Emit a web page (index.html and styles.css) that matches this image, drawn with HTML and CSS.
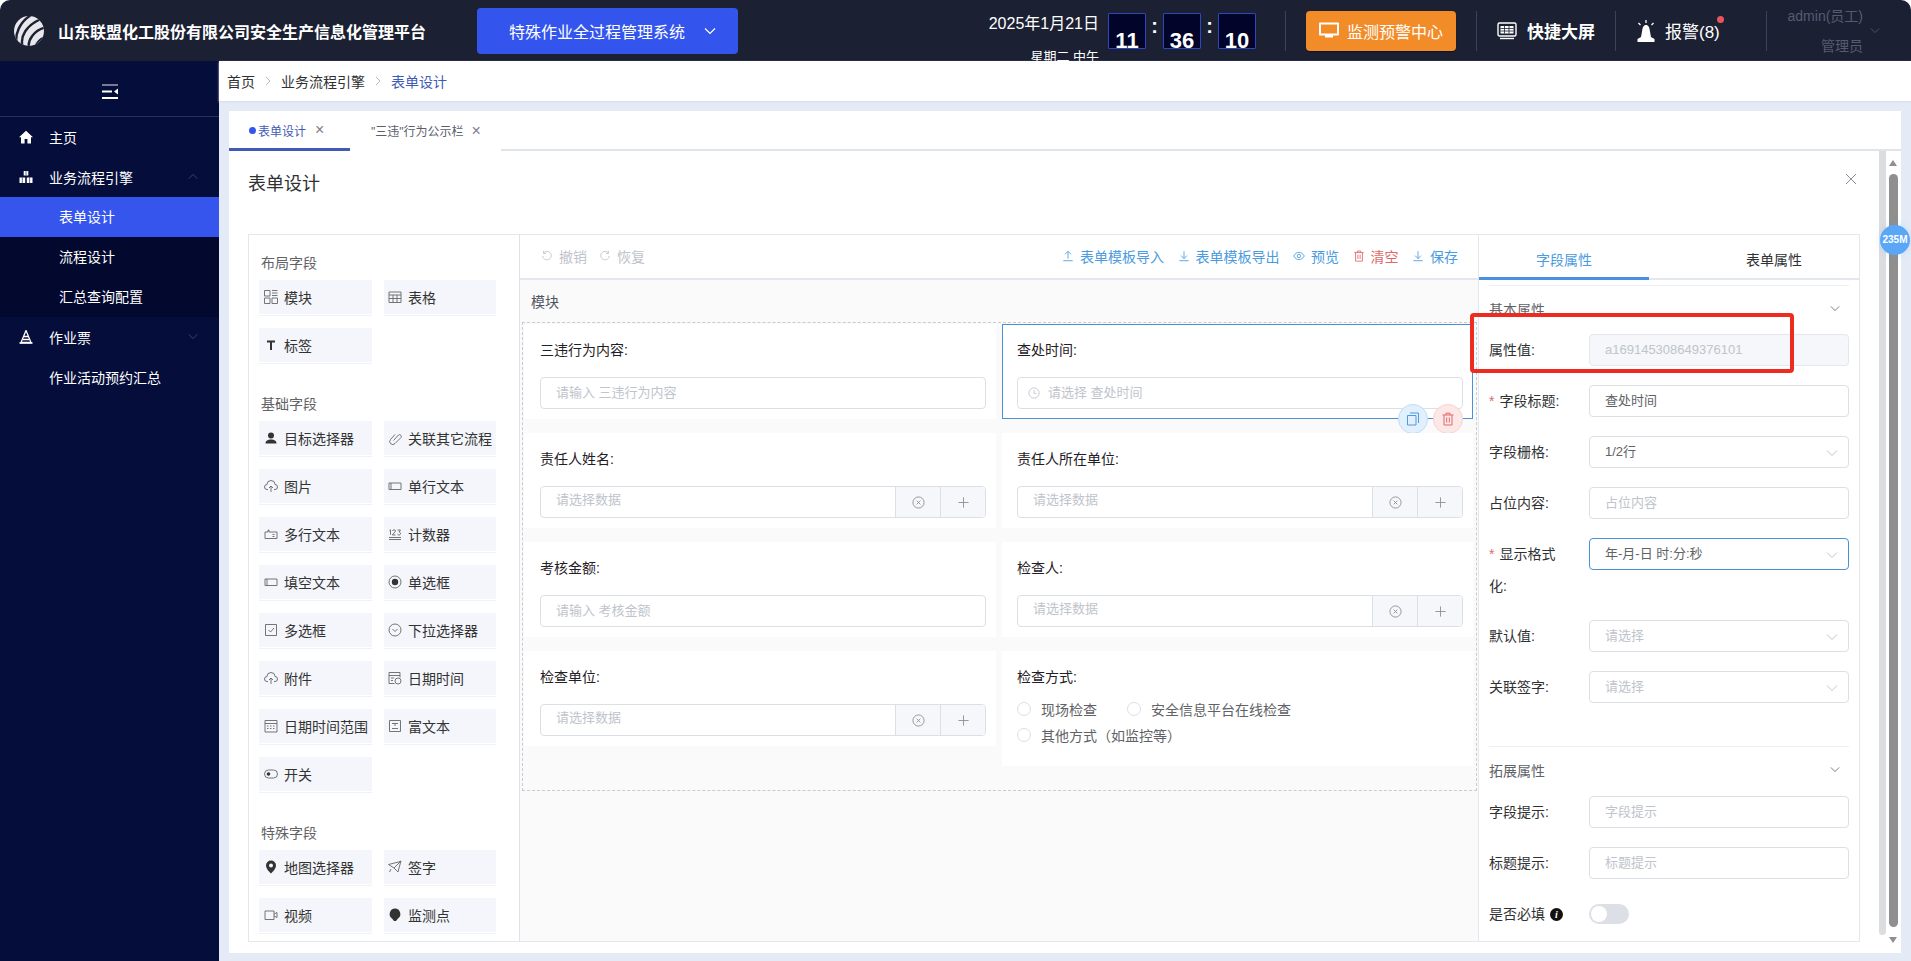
FILE: index.html
```html
<!DOCTYPE html>
<html lang="zh-CN">
<head>
<meta charset="utf-8">
<title>表单设计</title>
<link rel="stylesheet" href="styles.css">
</head>
<body>
<div class="app">
  <header class="topbar">
    <svg class="logo" viewBox="0 0 30 30"><defs><clipPath id="lc"><circle cx="15" cy="15" r="15"/></clipPath></defs><g clip-path="url(#lc)"><rect width="30" height="30" fill="#e8e8ec"/><g fill="none" stroke="#1b2033" stroke-width="2.4"><path d="M3 30C0 18 6 6 17-1"/><path d="M9 32C5 20 13 9 27 3"/><path d="M15 33C13 24 20 14 33 11"/><path d="M21 33C22 27 27 22 34 20"/><path d="M27 33C28 31 30 29 33 28"/></g></g></svg>
    <div class="brand">山东联盟化工股份有限公司安全生产信息化管理平台</div>
    <div class="sys-btn"><span>特殊作业全过程管理系统</span><svg class="chev-w" viewBox="0 0 12 8"><path d="M1 1.500l5 5 5-5"/></svg></div>
    <div class="date"><div>2025年1月21日</div><div class="week">星期二 中午</div></div>
    <div class="clock"><div class="digit">11</div><div class="colon">:</div><div class="digit">36</div><div class="colon">:</div><div class="digit">10</div></div>
    <div class="vline vl1"></div>
    <div class="warn-btn"><svg class="w-ic" viewBox="0 0 20 18"><path d="M1 1.500h18v11H1z" fill="none" stroke="#fff" stroke-width="2" stroke-linejoin="round"/><path d="M6 13h8v2.500H6z" fill="#fff"/></svg><span>监测预警中心</span></div>
    <div class="vline vl2"></div>
    <svg class="screen-ic" viewBox="0 0 20 20"><rect x="1" y="2" width="18" height="13" rx="1.500" fill="none" stroke="#fff" stroke-width="1.400"/><path d="M3.500 5h13v7.500h-13z" fill="#fff"/><path d="M3.500 7.500h13M3.500 10h13M7.500 5v7.500M12 5v7.500" stroke="#1b2033" stroke-width=".8"/><path d="M3 17.500h14" stroke="#fff" stroke-width="1.400"/></svg>
    <div class="big-link">快捷大屏</div>
    <div class="vline vl3"></div>
    <svg class="bell-ic" viewBox="0 0 20 22"><path d="M10 5c2.500 0 3.500 2.500 3.800 5.500L15 17l3.500 2v3H1.500v-3L5 17l1.200-6.500C6.500 7.500 7.500 5 10 5z" fill="#fff"/><path d="M10 0v3M2.500 3l2 2M17.500 3l-2 2" stroke="#fff" stroke-width="1.300"/></svg>
    <div class="alarm">报警(8)<i class="dot"></i></div>
    <div class="vline vl4"></div>
    <div class="user"><div>admin(员工)</div><div>管理员</div></div>
    <svg class="chev-user" viewBox="0 0 12 8"><path d="M1 1.500l5 5 5-5"/></svg>
  </header>

  <div class="body">
    <aside class="sidebar">
      <div class="fold"><svg class="fold-ic" viewBox="0 0 16 15"><path d="M0 1h16" stroke="#9aa0b8" stroke-width="1.500"/><path d="M0 7.500h10M0 14h16" stroke="#fff" stroke-width="1.800"/><path d="M16 4.500v6l-4-3z" fill="#fff"/></svg></div>
      <nav class="menu">
        <div class="mi"><svg class="mi-ic" viewBox="0 0 14 14"><path d="M7 .8L0 7.300h2V13.500h3.600V9h2.800v4.500H12V7.300h2z" fill="#fff"/></svg>主页</div>
        <div class="mi"><svg class="mi-ic" viewBox="0 0 14 14"><path d="M4.700 1h4.600v4.600H4.700zM.5 7.500h5.700v5.500H.5zM7.800 7.500h5.700v5.500H7.800z" fill="#fff"/><path d="M7 1v4.500M3.300 7.500V13M10.600 7.500V13" stroke="#050d3a" stroke-width=".6"/></svg>业务流程引擎<svg class="mi-arrow" viewBox="0 0 12 8"><path d="M1 6.500l5-5 5 5"/></svg></div>
        <div class="sub">
          <div class="si active">表单设计</div>
          <div class="si">流程设计</div>
          <div class="si">汇总查询配置</div>
        </div>
        <div class="mi"><svg class="mi-ic" viewBox="0 0 14 14"><path d="M7 .5L12 12.500H2z" fill="none" stroke="#fff" stroke-width="1.300"/><path d="M5 6.500h4.500M4 9.500h6" stroke="#fff" stroke-width="1.300"/><path d="M.5 13h13" stroke="#fff" stroke-width="1.600"/></svg>作业票<svg class="mi-arrow" viewBox="0 0 12 8"><path d="M1 1.500l5 5 5-5"/></svg></div>
        <div class="mi plain">作业活动预约汇总</div>
      </nav>
    </aside>

    <main class="content">
      <div class="crumbs">
        <span>首页</span><svg class="crumb-sep" viewBox="0 0 6 10"><path d="M1 1l4 4-4 4"/></svg>
        <span>业务流程引擎</span><svg class="crumb-sep" viewBox="0 0 6 10"><path d="M1 1l4 4-4 4"/></svg>
        <span class="crumb-on">表单设计</span>
      </div>
      <div class="page">
        <section class="card">
          <div class="tabs">
            <div class="tab tab-on"><i class="tab-dot"></i>表单设计<span class="tab-x">×</span></div>
            <div class="tab tab2">"三违"行为公示栏<span class="tab-x">×</span></div>
          </div>
          <div class="dlg-head">
            <div class="dlg-title">表单设计</div>
            <svg class="dlg-x" viewBox="0 0 10 10"><path d="M0 0l10 10M10 0L0 10"/></svg>
          </div>

          <div class="designer">
            <div class="palette">
              <div class="p-title">布局字段</div>
              <div class="p-grid">
                <div class="fld"><svg class="ic" viewBox="0 0 14 14"><path d="M.5.5h5.500v5.500H.5zM.5 8h5.500v5.500H.5zM8 8h5.500v5.500H8zM8 .5h5.500M8 3h5.500M8 5.500h5.500"/></svg>模块</div>
                <div class="fld"><svg class="ic" viewBox="0 0 14 14"><path d="M1 2h12v10.500H1zM1 5h12M5 5v7.500M9 5v7.500M1 8.500h12"/></svg>表格</div>
                <div class="fld"><svg class="ic" viewBox="0 0 14 14"><path class="solid" d="M3 2.500h8v2H8v7.500H6V4.500H3z"/></svg>标签</div>
              </div>
              <div class="p-title sec">基础字段</div>
              <div class="p-grid">
                <div class="fld"><svg class="ic" viewBox="0 0 14 14"><circle class="solid" cx="7" cy="4.500" r="3"/><path class="solid" d="M1.500 12.500c0-3 2.500-4 5.500-4s5.500 1 5.500 4z"/></svg>目标选择器</div>
                <div class="fld"><svg class="ic" viewBox="0 0 14 14"><path d="M5.500 9.500l5-5.500a1.800 1.800 0 0 1 2.500 2.500L7 12.500a3 3 0 0 1-4.500-4L7 3.500"/></svg>关联其它流程</div>
                <div class="fld"><svg class="ic" viewBox="0 0 14 14"><path d="M4 10.500H3A2.500 2.500 0 0 1 3 5.500 4 4 0 0 1 11 5.500a2.500 2.500 0 0 1 0 5h-1M7 13V7M5 9l2-2 2 2"/></svg>图片</div>
                <div class="fld"><svg class="ic" viewBox="0 0 14 14"><path d="M1 4h12v6.500H1zM3 4v6.500"/></svg>单行文本</div>
                <div class="fld"><svg class="ic" viewBox="0 0 14 14"><path d="M1 5h3V3h1v2h8v6.500H1zM8.500 7.500h2M8.500 9.500h2"/></svg>多行文本</div>
                <div class="fld"><svg class="ic" viewBox="0 0 14 14"><path d="M1.500 3.500l1-.7v5M4.500 4c0-1.500 3-1.500 3 0 0 1.500-3 2.500-3 4h3M9.500 3h3l-1.500 2c2 0 2 3 0 3-.7 0-1.200-.3-1.500-.7M1 10.500h12M1 12.500h12"/></svg>计数器</div>
                <div class="fld"><svg class="ic" viewBox="0 0 14 14"><path d="M1 4h12v6.500H1zM3 4v6.500"/></svg>填空文本</div>
                <div class="fld"><svg class="ic" viewBox="0 0 14 14"><circle cx="7" cy="7" r="6"/><circle class="solid" cx="7" cy="7" r="3.200"/></svg>单选框</div>
                <div class="fld"><svg class="ic" viewBox="0 0 14 14"><path d="M1.500 1.500h11v11h-11zM4.500 7l2 2 3.500-4"/></svg>多选框</div>
                <div class="fld"><svg class="ic" viewBox="0 0 14 14"><circle cx="7" cy="7" r="6"/><path d="M4.500 6l2.500 2.500L9.500 6"/></svg>下拉选择器</div>
                <div class="fld"><svg class="ic" viewBox="0 0 14 14"><path d="M4 10.500H3A2.500 2.500 0 0 1 3 5.500 4 4 0 0 1 11 5.500a2.500 2.500 0 0 1 0 5h-1M7 13V7M5 9l2-2 2 2"/></svg>附件</div>
                <div class="fld"><svg class="ic" viewBox="0 0 14 14"><path d="M6.500 12.500H1v-11h11v5M1 4.500h11M3 7h3M3 9.500h2"/><circle cx="10" cy="10" r="3"/></svg>日期时间</div>
                <div class="fld"><svg class="ic" viewBox="0 0 14 14"><path d="M1 1.500h12v11.500H1zM1 4.500h12M3 7h1.500M6 7h1.500M9 7h1.500M3 9.500h1.500M6 9.500h1.500M9 9.500h1.500"/></svg>日期时间范围</div>
                <div class="fld"><svg class="ic" viewBox="0 0 14 14"><path d="M1.500 1.500h11v11h-11zM4 4.500h6M7 4.500V7M4 9.500h6"/></svg>富文本</div>
                <div class="fld"><svg class="ic" viewBox="0 0 14 14"><rect x=".5" y="3" width="13" height="8" rx="4"/><circle class="solid" cx="4.500" cy="7" r="1.800"/></svg>开关</div>
              </div>
              <div class="p-title sec">特殊字段</div>
              <div class="p-grid">
                <div class="fld"><svg class="ic" viewBox="0 0 14 14"><path class="solid" fill-rule="evenodd" d="M7 .5a5 5 0 0 1 5 5c0 3-3 6-5 8-2-2-5-5-5-8a5 5 0 0 1 5-5zm0 3a2 2 0 1 0 0 4 2 2 0 0 0 0-4z"/></svg>地图选择器</div>
                <div class="fld"><svg class="ic" viewBox="0 0 14 14"><path d="M.5 4.500l10-2.500L13 1l-2 7-1 4-4-4zM6 8l7-7M3 9l-1.500 3"/></svg>签字</div>
                <div class="fld"><svg class="ic" viewBox="0 0 14 14"><path d="M1 3h9v8.500H1zM10 6l3-1.500v5L10 8"/></svg>视频</div>
                <div class="fld"><svg class="ic" viewBox="0 0 14 14"><path class="solid" d="M7 .5a5.500 5.500 0 0 1 3 10L8 13H6l-2-2.500A5.500 5.500 0 0 1 7 .5z"/></svg>监测点</div>
              </div>
            </div>

            <div class="canvas">
              <div class="toolbar">
                <div class="tb-group mute">
                  <span class="tb"><svg class="tb-ic" viewBox="0 0 14 14"><path d="M3 3.500a5 5 0 1 1-1 3.500M3 1v3h3"/></svg>撤销</span>
                  <span class="tb"><svg class="tb-ic" viewBox="0 0 14 14"><path d="M11 3.500a5 5 0 1 0 1 3.500M11 1v3H8"/></svg>恢复</span>
                </div>
                <div class="tb-group blue">
                  <span class="tb"><svg class="tb-ic" viewBox="0 0 14 14"><path d="M7 10V1.500M3.500 5L7 1.500 10.500 5M1.500 12.500h11"/></svg>表单模板导入</span>
                  <span class="tb"><svg class="tb-ic" viewBox="0 0 14 14"><path d="M7 1.500V10M3.500 6.500L7 10l3.500-3.500M1.500 12.500h11"/></svg>表单模板导出</span>
                  <span class="tb"><svg class="tb-ic" viewBox="0 0 14 14"><path d="M.8 7C2.500 4 4.500 2.800 7 2.800S11.500 4 13.200 7C11.500 10 9.500 11.200 7 11.200S2.500 10 .8 7z"/><circle cx="7" cy="7" r="2"/></svg>预览</span>
                  <span class="tb red"><svg class="tb-ic" viewBox="0 0 14 14"><path d="M1.500 3h11M5 3V1.200h4V3M3 3v10h8V3M5.700 5.500v5M8.300 5.500v5"/></svg>清空</span>
                  <span class="tb"><svg class="tb-ic" viewBox="0 0 14 14"><path d="M7 1.500V10M3.500 6.500L7 10l3.500-3.500M1.500 12.500h11"/></svg>保存</span>
                </div>
              </div>
              <div class="mod-title">模块</div>
              <div class="drop">
                <div class="cell"><div class="c-label">三违行为内容:</div><div class="inp ph">请输入 三违行为内容</div></div>
                <div class="cell selected"><div class="c-label">查处时间:</div><div class="inp ph"><svg class="clock-ic" viewBox="0 0 14 14"><circle cx="7" cy="7" r="6"/><path d="M7 3.500V7.500h3"/></svg>请选择 查处时间</div>
                  <div class="c-btn copy"><svg viewBox="0 0 14 14"><path d="M4 1h8.500v10M1.500 3.500H10V13H1.500z"/></svg></div>
                  <div class="c-btn del"><svg viewBox="0 0 14 14"><path d="M1.500 3h11M5 3V1.200h4V3M3 3v10h8V3M5.700 5.500v5M8.300 5.500v5"/></svg></div>
                </div>
                <div class="cell"><div class="c-label">责任人姓名:</div><div class="ig"><div class="ig-text">请选择数据</div><div class="ig-a"><svg viewBox="0 0 14 14"><circle cx="7" cy="7" r="6"/><path d="M5 5l4 4M9 5L5 9"/></svg></div><div class="ig-a"><svg viewBox="0 0 14 14"><path d="M7 1.500v11M1.500 7h11"/></svg></div></div></div>
                <div class="cell"><div class="c-label">责任人所在单位:</div><div class="ig"><div class="ig-text">请选择数据</div><div class="ig-a"><svg viewBox="0 0 14 14"><circle cx="7" cy="7" r="6"/><path d="M5 5l4 4M9 5L5 9"/></svg></div><div class="ig-a"><svg viewBox="0 0 14 14"><path d="M7 1.500v11M1.500 7h11"/></svg></div></div></div>
                <div class="cell"><div class="c-label">考核金额:</div><div class="inp ph">请输入 考核金额</div></div>
                <div class="cell"><div class="c-label">检查人:</div><div class="ig"><div class="ig-text">请选择数据</div><div class="ig-a"><svg viewBox="0 0 14 14"><circle cx="7" cy="7" r="6"/><path d="M5 5l4 4M9 5L5 9"/></svg></div><div class="ig-a"><svg viewBox="0 0 14 14"><path d="M7 1.500v11M1.500 7h11"/></svg></div></div></div>
                <div class="cell"><div class="c-label">检查单位:</div><div class="ig"><div class="ig-text">请选择数据</div><div class="ig-a"><svg viewBox="0 0 14 14"><circle cx="7" cy="7" r="6"/><path d="M5 5l4 4M9 5L5 9"/></svg></div><div class="ig-a"><svg viewBox="0 0 14 14"><path d="M7 1.500v11M1.500 7h11"/></svg></div></div></div>
                <div class="cell"><div class="c-label">检查方式:</div>
                  <div class="radios">
                    <span class="radio"><i></i>现场检查</span><span class="radio"><i></i>安全信息平台在线检查</span><span class="radio"><i></i>其他方式（如监控等）</span>
                  </div>
                </div>
              </div>
            </div>

            <div class="props">
              <div class="pr-tabs"><div class="pr-tab on">字段属性</div><div class="pr-tab">表单属性</div></div>
              <div class="pr-body">
                <div class="pr-sec first"><span>基本属性</span><svg class="pr-chev" viewBox="0 0 12 8"><path d="M1 1.500l5 5 5-5"/></svg></div>
                <div class="row"><label>属性值:</label><div class="pi dis num">a169145308649376101</div></div>
                <div class="row"><label><b>*</b>字段标题:</label><div class="pi val">查处时间</div></div>
                <div class="row"><label>字段栅格:</label><div class="pi val">1/2行<svg class="sel-chev" viewBox="0 0 12 8"><path d="M1 1.500l5 5 5-5"/></svg></div></div>
                <div class="row"><label>占位内容:</label><div class="pi">占位内容</div></div>
                <div class="row wrap"><label><b>*</b>显示格式化:</label><div class="pi val focus">年-月-日 时:分:秒<svg class="sel-chev" viewBox="0 0 12 8"><path d="M1 1.500l5 5 5-5"/></svg></div></div>
                <div class="row"><label>默认值:</label><div class="pi">请选择<svg class="sel-chev" viewBox="0 0 12 8"><path d="M1 1.500l5 5 5-5"/></svg></div></div>
                <div class="row"><label>关联签字:</label><div class="pi">请选择<svg class="sel-chev" viewBox="0 0 12 8"><path d="M1 1.500l5 5 5-5"/></svg></div></div>
                <div class="pr-sec"><span>拓展属性</span><svg class="pr-chev" viewBox="0 0 12 8"><path d="M1 1.500l5 5 5-5"/></svg></div>
                <div class="row"><label>字段提示:</label><div class="pi">字段提示</div></div>
                <div class="row"><label>标题提示:</label><div class="pi">标题提示</div></div>
                <div class="row"><label class="nowrap">是否必填<i class="info">i</i></label><div class="switch"><i></i></div></div>
              </div>
            </div>
          </div>

          <div class="scroll-thin"></div>
          <div class="scroll-fat"><i class="arr-up"></i><i class="thumb"></i><i class="arr-dn"></i></div>
          <div class="mem">235M</div>
        </section>
      </div>
    </main>
  </div>
  <div class="annot"></div>
</div>
</body>
</html>
```
FILE: styles.css
```css
* { box-sizing: border-box; }
html, body { margin: 0; padding: 0; background: #fff; }
body { font-family: "Liberation Sans", "Noto Sans CJK SC", sans-serif; font-size: 14px; color: #303133; }
.app { position: relative; width: 1911px; height: 961px; overflow: hidden; display: flex; flex-direction: column; }

/* top bar */
.topbar { height: 61px; flex: none; background: #1b2033; border-radius: 10px 10px 0 0; display: flex; align-items: center; color: #fff; overflow: hidden; }
.logo { width: 30px; height: 30px; margin-left: 14px; flex: none; }
.brand { margin-left: 14px; width: 369px; font-size: 16px; font-weight: 700; white-space: nowrap; flex: none; }
.sys-btn { margin-left: 50px; width: 261px; height: 46px; flex: none; background: #3355ee; border-radius: 4px; display: flex; align-items: center; font-size: 16px; padding-left: 32px; }
.chev-w { width: 12px; height: 8px; margin-left: 19px; fill: none; stroke: #fff; stroke-width: 1.2; }
.date { margin-left: 247px; width: 114px; flex: none; align-self: flex-start; padding-top: 13px; text-align: right; font-size: 16px; line-height: 22px; white-space: nowrap; }
.week { font-size: 13px; margin-top: 11px; }
.clock { margin-left: 9px; display: flex; align-items: flex-start; flex: none; height: 36px; align-self: flex-start; margin-top: 13px; }
.digit { width: 38px; height: 36px; background: #02042a; border: 1px solid #2d47c0; border-radius: 1px; font-size: 22px; font-weight: 700; line-height: 14px; text-align: center; padding-top: 20px; }
.colon { width: 17px; height: 30px; line-height: 26px; font-size: 20px; font-weight: 700; text-align: center; }
.vline { width: 1px; height: 40px; background: #3c4259; flex: none; }
.vl1 { margin-left: 29px; }
.warn-btn { margin-left: 20px; width: 150px; height: 40px; flex: none; background: #f28c28; border-radius: 4px; display: flex; align-items: center; padding-left: 13px; font-size: 16px; box-shadow: 0 1px 1px #0006; }
.w-ic { width: 20px; height: 18px; margin-right: 8px; }
.vl2 { margin-left: 20px; }
.screen-ic { width: 20px; height: 20px; margin-left: 20px; flex: none; }
.big-link { margin-left: 10px; font-size: 17px; font-weight: 700; width: 68px; white-space: nowrap; }
.vl3 { margin-left: 20px; }
.bell-ic { width: 20px; height: 22px; margin-left: 20px; flex: none; }
.alarm { position: relative; margin-left: 9px; width: 56px; font-size: 17px; white-space: nowrap; }
.dot { position: absolute; left: 52px; top: -2px; width: 7px; height: 7px; border-radius: 50%; background: #e6555e; }
.vl4 { margin-left: 45px; }
.user { width: 95px; margin-left: 1px; text-align: right; color: #565c70; font-size: 14px; line-height: 30px; white-space: nowrap; flex: none; }
.chev-user { width: 10px; height: 7px; margin-left: 7px; fill: none; stroke: #565c70; stroke-width: 1; flex: none; }

.body { flex: 1; display: flex; min-height: 0; }

/* sidebar */
.sidebar { width: 219px; flex: none; background: #050d3a; color: #fff; }
.fold { height: 56px; border-bottom: 1px solid #2a3155; display: flex; align-items: center; justify-content: center; padding-top: 5px; }
.fold-ic { width: 16px; height: 15px; }
.mi { height: 40px; display: flex; align-items: center; padding-left: 19px; position: relative; }
.mi-ic { width: 14px; height: 14px; margin-right: 16px; flex: none; }
.mi-arrow { position: absolute; left: 188px; top: 16px; width: 10px; height: 7px; fill: none; stroke: #4a5070; stroke-width: 1; }
.plain { padding-left: 49px; }
.sub { background: #03082e; }
.si { height: 40px; line-height: 40px; padding-left: 59px; }
.si.active { background: #3555ec; }

/* main */
.content { flex: 1; min-width: 0; display: flex; flex-direction: column; background: #e4ebf6; }
.crumbs { height: 40px; flex: none; background: #fff; display: flex; align-items: center; padding-left: 8px; color: #303133; box-shadow: 0 1px 2px #d5dcea; }
.crumb-sep { width: 6px; height: 10px; margin: 0 10px; fill: none; stroke: #b5b9c4; stroke-width: 1; }
.crumb-on { color: #3f5bb5; }
.page { flex: 1; padding: 10px 10px 8px 10px; min-height: 0; }
.card { position: relative; height: 100%; background: #fff; padding: 0 41px 0 19px; }

.tabs { height: 40px; margin: 0 -41px 0 -19px; display: flex; border-bottom: 2px solid #dfe3ea; }
.tab { height: 40px; display: flex; align-items: center; font-size: 12px; color: #5a5e6b; white-space: nowrap; }
.tab-on { width: 121px; padding-left: 20px; color: #3f5bb5; border-bottom: 3px solid #3f5bb5; background: #fff; padding-top: 1px; }
.tab2 { width: 151px; padding-left: 21px; background: #fff; border-bottom: 2px solid #fff; padding-top: 1px; }
.tab-dot { width: 7px; height: 7px; border-radius: 50%; background: #3355ee; margin-right: 2px; }
.tab-on .tab-x { margin-left: 9px; }
.tab-x { margin-left: 8px; font-size: 16px; font-weight: 400; color: #7d818c; line-height: 1; }

.dlg-head { height: 83px; display: flex; justify-content: space-between; padding-top: 21px; }
.dlg-title { font-size: 18px; line-height: 24px; color: #303133; }
.dlg-x { width: 10px; height: 10px; margin: 2px 4px 0 0; fill: none; stroke: #8a8e99; stroke-width: 1; }

.designer { display: flex; height: 708px; border: 1px solid #e4e7ed; }

/* palette */
.palette { width: 271px; flex: none; padding: 17px 0 0 10px; border-right: 1px solid #dfe2e8; }
.p-title { line-height: 22px; color: #606266; margin: 0 0 6px 2px; }
.p-title.sec { margin-top: 29px; }
.p-grid { display: grid; grid-template-columns: 113px 112px; gap: 12px; grid-auto-rows: 36px; }
.fld { background: #f4f6fb; border-bottom: 1px solid #fff; box-shadow: 0 1px 0 #f0f2f7; display: flex; align-items: center; padding-left: 5px; color: #333; white-space: nowrap; height: 35px; }
.fld:nth-child(even) { padding-left: 4px; }
.ic { width: 14px; height: 14px; margin-right: 6px; flex: none; fill: none; stroke: #666; stroke-width: .9; }
.ic .solid { fill: #333; stroke: none; }

/* canvas */
.canvas { width: 958px; flex: none; background: #fafafa; padding-left: 2px; }
.toolbar { height: 45px; margin-left: -2px; background: #fff; border-bottom: 2px solid #e4e7ed; display: flex; justify-content: space-between; align-items: center; padding: 0 20px 1px 21px; }
.tb-group { display: flex; gap: 13.500px; }
.mute.tb-group { gap: 12px; }
.tb { display: flex; align-items: center; white-space: nowrap; }
.tb-ic { width: 12px; height: 12px; margin-right: 6px; fill: none; stroke: currentColor; stroke-width: 1; }
.mute { color: #c0c4cc; }
.blue { color: #4a9be0; }
.red { color: #e0686a; }
.mod-title { height: 42px; line-height: 44px; padding-left: 9px; color: #505360; }
.drop { width: 955px; height: 469px; border: 1px dashed #c8cbd0; padding: 1px 3px 0 1px; display: grid; grid-template-columns: 472px 471px; column-gap: 6px; row-gap: 14px; align-items: start; align-content: start; }
.cell { position: relative; background: #fff; padding: 15px 10px 10px 16px; min-height: 94.670px; }
.cell:nth-child(even) { padding-left: 15px; }
.cell.selected { outline: 1px solid #4a90d9; outline-offset: -1px; }
.c-label { height: 22px; line-height: 22px; color: #1f2026; margin-bottom: 16px; }
.inp { height: 32px; border: 1px solid #dcdfe6; border-radius: 4px; display: flex; align-items: center; padding: 0 0 3px 15px; font-size: 13px; color: #c0c4cc; background: #fff; }
.clock-ic { width: 12px; height: 12px; margin: 2px 8px 0 -5px; fill: none; stroke: #c0c4cc; stroke-width: 1; }
.ig { height: 32px; border: 1px solid #dcdfe6; border-radius: 4px; display: flex; overflow: hidden; background: #fff; }
.ig-text { flex: 1; padding-left: 15px; line-height: 26px; font-size: 13px; color: #c0c4cc; }
.ig-a { width: 45px; background: #f5f7fa; border-left: 1px solid #dcdfe6; display: flex; align-items: center; justify-content: center; }
.ig-a svg { width: 13px; height: 13px; fill: none; stroke: #8e929c; stroke-width: 1; }
.c-btn { position: absolute; top: 80px; width: 30px; height: 30px; border-radius: 50%; display: flex; align-items: center; justify-content: center; }
.c-btn svg { width: 14px; height: 14px; fill: none; stroke-width: 1; }
.copy { left: 396px; background: #e2f0fd; border: 1px solid #bcdcf8; }
.copy svg { stroke: #4a9be0; }
.del { left: 431px; background: #fde8e8; border: 1px solid #f8d0d0; }
.del svg { stroke: #e0686a; }
.radios { display: flex; flex-wrap: wrap; align-content: flex-start; width: 320px; margin-top: -7px; min-height: 59px; }
.radio { height: 26px; display: flex; align-items: center; color: #606266; margin-right: 30px; white-space: nowrap; padding-bottom: 2px; }
.radio i { width: 14px; height: 14px; border: 1px solid #dcdfe6; border-radius: 50%; margin-right: 10px; background: #fff; }

/* props */
.props { width: 381px; flex: none; border-left: 1px solid #e4e7ed; }
.pr-tabs { height: 45px; display: flex; border-bottom: 2px solid #e4e7ed; }
.pr-tab { width: 170px; flex: none; height: 45px; line-height: 50px; text-align: center; color: #303133; }
.pr-tab + .pr-tab { width: 210px; padding-left: 40px; }
.pr-tab.on { color: #4a9be0; border-bottom: 3px solid #4a90e2; }
.pr-body { padding: 5px 10px 0; }
.pr-sec { height: 46px; display: flex; align-items: center; justify-content: space-between; border-top: 1px solid #ebeef5; margin: 0 0 3px; color: #606266; padding-right: 9px; }
.row + .pr-sec { margin-top: 43px; margin-bottom: 4px; }
.pr-chev { width: 10px; height: 7px; fill: none; stroke: #606266; stroke-width: 1; }
.row { display: flex; align-items: flex-start; margin-bottom: 19px; }
.row.wrap { margin-bottom: 18px; }
.row label { width: 78px; margin-right: 22px; line-height: 32px; color: #303133; flex: none; }
.row label b { color: #e0686a; font-weight: 400; margin-right: 5px; }
.nowrap { white-space: nowrap; display: flex; align-items: center; }
.pi { position: relative; width: 260px; height: 32px; border: 1px solid #dcdfe6; border-radius: 4px; padding-left: 15px; line-height: 30px; font-size: 13px; color: #c0c4cc; background: #fff; }
.pi.val { color: #606266; }
.pi.dis { background: #f5f7fa; border-color: #e4e7ed; }
.pi.focus { border-color: #4a90d9; }
.sel-chev { position: absolute; right: 10px; top: 12px; width: 12px; height: 8px; fill: none; stroke: #c0c4cc; stroke-width: 1; }
.info { width: 13px; height: 13px; margin-left: 5px; flex: none; border-radius: 50%; background: #111; color: #fff; font: italic 700 10px/13px "Liberation Serif", serif; text-align: center; }
.switch { width: 40px; height: 20px; margin-top: 6px; background: #dcdfe6; border-radius: 10px; padding: 2px; }
.switch i { display: block; width: 16px; height: 16px; background: #fff; border-radius: 50%; }

/* overlays */
.scroll-thin { position: absolute; left: 1650px; top: 40px; width: 7px; height: 784px; background: #dcdde1; border-radius: 0 0 4px 4px; }
.scroll-fat { position: absolute; left: 1660px; top: 49px; width: 9px; height: 783px; }
.arr-up { position: absolute; left: 0; top: 0; border: 4.500px solid transparent; border-top: 0; border-bottom: 6px solid #8f8f8f; }
.thumb { position: absolute; left: 0; top: 14px; width: 9px; height: 753px; background: #8f8f8f; border-radius: 5px; }
.arr-dn { position: absolute; left: 0; top: 777px; border: 4.500px solid transparent; border-bottom: 0; border-top: 6px solid #8f8f8f; }
.mem { position: absolute; left: 1651px; top: 114px; width: 30px; height: 30px; border-radius: 50%; background: #5aa7f7; color: #fff; font-size: 10px; font-weight: 700; line-height: 30px; text-align: center; white-space: nowrap; box-shadow: 0 0 8px #5aa7f733; }
.annot { position: absolute; left: 1470px; top: 313px; width: 324px; height: 60px; border: 4px solid #ee2b20; border-radius: 4px; }
```
